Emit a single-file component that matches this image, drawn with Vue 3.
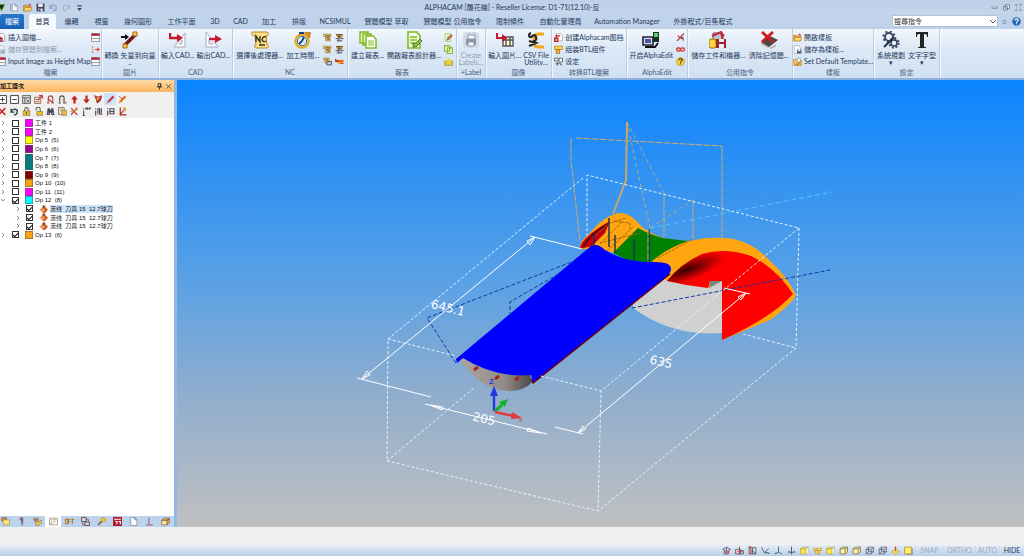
<script setup>
import { ref } from 'vue'

const tabs = [
  ['編輯', 31], ['視窗', 29], ['幾何圖形', 44], ['工作平面', 43], ['3D', 24], ['CAD', 27], ['加工', 30], ['排版', 30],
  ['NCSIMUL', 42], ['實體模型 萃取', 61], ['實體模型 公用指令', 71], ['限制條件', 44], ['自動化管理員', 57],
  ['Automation Manager', 76], ['外掛程式/巨集程式', 76]
]

const groups = [
  { label: '檔案', lists: [
    [{ i: 'insert', t: '插入圖檔...' }, { i: 'savebody', t: '儲存實體到檔案...', off: true }, { i: 'table', t: 'Input Image as Height Map' }],
    [{ i: 'table' }, { i: 'redarrow' }, { i: 'table' }]
  ] },
  { label: '圖片', big: [{ i: 'vector', t: '轉換 矢量到向量\n..' }] },
  { label: 'CAD', big: [{ i: 'cadin', t: '輸入CAD...' }, { i: 'cadout', t: '輸出CAD...' }] },
  { label: 'NC', big: [{ i: 'nc', t: '選擇後處理器...' }, { i: 'clock', t: '加工時間...' }], lists: [
    [{ i: 'ncs' }, { i: 'ncs' }, { i: 'nct' }], [{ i: 'ncl' }, { i: 'ncl' }, { i: 'ncr' }]
  ] },
  { label: '報表', big: [{ i: 'reports', t: '建立報表...' }, { i: 'design', t: '開啟報表設計器...' }], lists: [
    [{ i: 'gedit' }, { i: 'gcopy' }, { i: 'gstar' }]
  ] },
  { label: '+Label', big: [{ i: 'printer', t: 'Create\nLabels...', off: true }] },
  { label: '圖像', big: [{ i: 'imgin', t: '輸入圖片...' }, { i: 'csv', t: 'CSV File\nUtility...' }] },
  { label: '转换BTL檔案', lists: [
    [{ i: 'btl1', t: '创建Alphacam图档' }, { i: 'btl2', t: '组装BTL组件' }, { i: 'btl3', t: '设定' }]
  ] },
  { label: 'AlphaEdit', big: [{ i: 'aedit', t: '开启AlphaEdit' }], lists: [[{ i: 'slash' }, { i: 'redlink' }, { i: 'help2' }]] },
  { label: '公用指令', big: [{ i: 'savem', t: '儲存工件和機器...' }, { i: 'clearm', t: '清除記憶體...' }] },
  { label: '樣板', lists: [
    [{ i: 'open', t: '開啟樣板' }, { i: 'saveas', t: '儲存為樣板...' }, { i: 'settpl', t: 'Set Default Template...' }]
  ] },
  { label: '設定', big: [{ i: 'gears', t: '系統規劃\n▾' }, { i: 'bigt', t: '文字字型\n▾' }] }
]

const tools = [
  ['plusbox', 'minusbox', 'tgrid', 'tgridx', 'lockr', 'lockg', 'up', 'down', 'flag', 'pen', 'penx'],
  ['redx', 'undob', 'lock', 'unlock', 'binoc', 'pages', 'cross', 'ia', 'ib', 'ic', 'axis']
]

const rows = ref([
  { c: '#ff00ff', t: '工件 1' },
  { c: '#ff00ff', t: '工件 2' },
  { c: '#ffff00', t: 'Op 5  (5)' },
  { c: '#990099', t: 'Op 6  (6)' },
  { c: '#008080', t: 'Op 7  (7)' },
  { c: '#008080', t: 'Op 8  (8)' },
  { c: '#800000', t: 'Op 9  (9)' },
  { c: '#ffa010', t: 'Op 10  (10)' },
  { c: '#ff00ff', t: 'Op 11  (11)' },
  { c: '#00ffff', t: 'Op 12  (8)', on: true, open: true },
  { child: true, t: '流线  刀具 15  12.7球刀', on: true, sel: true },
  { child: true, t: '流线  刀具 15  12.7球刀', on: true },
  { child: true, t: '流线  刀具 15  12.7球刀', on: true },
  { c: '#ffa010', t: 'Op 13  (6)', on: true }
])

const panelTabs = ['ycube', 'drill', 'hand', 'list', 'text3', 'blocks', 'wand', 'redbox', 'page', 'perp', 'ybox']
const views = ['cr1', 'cr2', 'cr3', 'ax1', 'ax2', 'ax3', 'cy1', 'cy2', 'cy1', 'cy3', 'cy3', 'ck', 'ck', 'man', 'ysq']
const quick = ['logo', 'new', 'open', 'save', 'undo', 'redo', 'more']
const query = ref('')
</script>

<template>
  <div class="app">
    <svg class="defs" aria-hidden="true">
      <symbol id="logo" viewBox="0 0 16 16"><path d="M0 2h15L8 15z" fill="#6b0" /><path d="M3 3l5 10 5-10z" fill="#231" /></symbol>
      <symbol id="new" viewBox="0 0 16 16"><path d="M1 2v12M4 2v12h9V6L9 2zM9 2v4h4" fill="#fff" stroke="#68788e" /></symbol>
      <symbol id="open" viewBox="0 0 16 16"><path d="M1 14V4h5l2 2h6v8z" fill="#e8a33a" stroke="#a86a10" /><path d="M1 14l3-6h12l-3 6z" fill="#ffd96a" stroke="#b57a18" /><path d="M8 4l4-3 3 4z" fill="#d33" /></symbol>
      <symbol id="save" viewBox="0 0 16 16"><path d="M1 1h14v14H1z" fill="#445" /><path d="M4 1h8v6H4z" fill="#eef" /><path d="M4 10h8v5H4z" fill="#dde" /><path d="M5 11h3v4H5z" fill="#445" /></symbol>
      <symbol id="undo" viewBox="0 0 16 16"><path d="M2 3v6h6M2 8c4-7 12-4 11 1-.5 3-3 5-6 5" fill="none" stroke="#8b9db8" stroke-width="2" /></symbol>
      <symbol id="undob" viewBox="0 0 16 16"><path d="M2 3v6h6M2 8c4-7 12-4 11 1-.5 3-3 5-6 5" fill="none" stroke="#344" stroke-width="2.4" /></symbol>
      <symbol id="redo" viewBox="0 0 16 16"><path d="M13 3v6H8M13 8C10 1 2 3 2 9c0 3 2 5 6 5" fill="none" stroke="#a3b3ca" stroke-width="2" /></symbol>
      <symbol id="more" viewBox="0 0 16 16"><path d="M4 5h8" stroke="#345" stroke-width="2" /><path d="M4 9h8l-4 5z" fill="#345" /></symbol>
      <symbol id="insert" viewBox="0 0 16 16"><path d="M2 1h8l4 4v10H2z" fill="#fff" stroke="#667" /><path d="M1 9h8v5H1zM5 5v7m-3-3 3 3 3-3" fill="none" stroke="#b01030" stroke-width="2" /></symbol>
      <symbol id="savebody" viewBox="0 0 16 16"><path d="M3 1h7l3 4v10H3z" fill="#eef1f6" stroke="#9aa6b6" /><path d="M6 8h8v7H6z" fill="#a8b0bc" /></symbol>
      <symbol id="table" viewBox="0 0 16 16"><path d="M1 1h14v14H1z" fill="#fff" stroke="#555" /><path d="M1 1h14v4H1z" fill="#b41c30" /><path d="M1 10h14" stroke="#555" /></symbol>
      <symbol id="redarrow" viewBox="0 0 16 16"><path d="M3 2v12M1 3h4M1 13h4" stroke="#f08060" stroke-width="2" stroke-dasharray="3 1" /><path d="M7 7h4V4l5 4-5 4V9H7z" fill="#e04830" /></symbol>
      <symbol id="vector" viewBox="0 0 18 18"><path d="M0 5h4V3l4 3-4 3V7H0z" fill="#111" /><path d="M4 14 15 3" stroke="#701818" stroke-width="3.5" /><path d="M2 13h4v4H2zM12 1h4v4h-4z" fill="#ffd040" stroke="#a06010" /></symbol>
      <symbol id="cadin" viewBox="0 0 18 18"><path d="M16 2v14H5zM13 9v4h-3z" fill="#fbfcff" stroke="#aab" /><path d="M1 2v5h8" fill="none" stroke="#c31a30" stroke-width="2.4" /><path d="M8 3l6 4-6 4z" fill="#c31a30" /></symbol>
      <symbol id="cadout" viewBox="0 0 18 18"><path d="M2 1v15h12zM5 9v4h4z" fill="#fbfcff" stroke="#aab" /><path d="M5 8h8" stroke="#c31a30" stroke-width="2.2" /><path d="M11 4l7 4-7 4z" fill="#c31a30" /></symbol>
      <symbol id="nc" viewBox="0 0 18 18"><path d="M2 1h13c3 0 3 4 0 4l1 9c2 0 2 3 0 3H6c-3 0-3-3-1-3L4 5C0 5 0 1 2 1z" fill="#ffe18a" stroke="#b88420" /><path d="M5 11V5l4 6V5m6 1c-5-2-5 7 0 4M8 14h6" fill="none" stroke="#332" stroke-width="1.4" /></symbol>
      <symbol id="clock" viewBox="0 0 18 18"><path d="M10 1h7l-1 6-3 1z" fill="#c58a28" /><circle cx="8" cy="10" r="6.5" fill="#fff" stroke="#e3ac18" stroke-width="2.4" /><circle cx="8" cy="10" r="4.6" fill="#e0efff" stroke="#2b66b0" /><path d="M5 13l3-3 2-4M5 2h5" fill="none" stroke="#133c88" stroke-width="1.8" /></symbol>
      <symbol id="ncs" viewBox="0 0 16 16"><path d="M1 2h13v4h-2l1 8H5L4 6H1z" fill="#f6d26a" stroke="#8a6018" /><path d="M4 5h8M6 8h5M7 11h5" stroke="#432" stroke-width="1.5" /></symbol>
      <symbol id="nct" viewBox="0 0 16 16"><path d="M1 2h10v9H4z" fill="#efc250" stroke="#8a6018" /><path d="M7 8h8v6H7zM4 5h5" fill="#ccd" stroke="#444" stroke-width="1.5" /></symbol>
      <symbol id="ncl" viewBox="0 0 16 16"><path d="M2 2h12v5H2z" fill="#e6b33d" /><path d="M2 3h12M5 7h7M1 10h6M9 10h6M3 14h10M7 3v11" stroke="#333" stroke-width="1.5" /></symbol>
      <symbol id="ncr" viewBox="0 0 16 16"><path d="M4 5h11v7H4z" fill="#f3b43b" /><path d="M1 5l5 3H1zM6 7h9M9 11h6" fill="#c31" stroke="#c31" stroke-width="2" /></symbol>
      <symbol id="reports" viewBox="0 0 18 18"><path d="M1 1h8v11H1zM4 3h8v11H4z" fill="#eaf8d5" stroke="#80bb20" stroke-width="1.5" /><path d="M7 5h7l3 3v9H7z" fill="#fff" stroke="#80bb20" stroke-width="1.5" /><path d="M9 10h6m-6 2h6m-6 2h6" stroke="#80bb20" /></symbol>
      <symbol id="design" viewBox="0 0 18 18"><path d="M3 1h9l3 4v12H3z" fill="#f4fae9" stroke="#80bb20" stroke-width="1.6" /><path d="M5 6h7M5 9h7M5 12h4" stroke="#80bb20" stroke-width="1.4" /><path d="M8 12h3l4-4 2 2-6 6H8z" fill="#8bbd45" stroke="#567d22" /></symbol>
      <symbol id="gedit" viewBox="0 0 16 16"><path d="M2 1h10v14H2z" fill="#e5f5cb" stroke="#86b83c" /><path d="M5 13l2-5 6-5 2 2-6 6z" fill="#d5752a" stroke="#734" /></symbol>
      <symbol id="gcopy" viewBox="0 0 16 16"><path d="M1 1h9v10H1zM6 5h9v10H6z" fill="#eaf7cf" stroke="#86b83c" stroke-width="2" /></symbol>
      <symbol id="gstar" viewBox="0 0 16 16"><path d="M1 7h14v8H1z" fill="#d3c24b" stroke="#87902e" /><path d="M8 1l2 4 5 1-4 3 1 5-4-2-4 2 1-5-4-3 5-1z" fill="#f2d034" /></symbol>
      <symbol id="printer" viewBox="0 0 18 18"><rect x="1" y="1" width="16" height="16" rx="4" fill="#d3dae5" /><path d="M4 8h10v6H4z" fill="#8795aa" /><path d="M6 4h7v4H6zM6 11h6v4H6z" fill="#f6f8fc" stroke="#8795aa" /></symbol>
      <symbol id="imgin" viewBox="0 0 18 18"><path d="M7 6h10v9H7zM10 6v9M14 6v9M7 9h10" fill="#fff4da" stroke="#555" stroke-width="1.4" /><path d="M1 2v5h6" fill="none" stroke="#c31a30" stroke-width="2" /><path d="M6 3l5 4-5 4z" fill="#c31a30" /></symbol>
      <symbol id="csv" viewBox="0 0 18 18"><path d="M17 3H11C8 3 7 5 7 8v3c0 4 2 5 4 5h6" fill="none" stroke="#f6a81c" stroke-width="3" /><path d="M4 2C1 3 2 7 4 6s4-4 5 0-2 4-2 3M2 10l7 2-7 3" fill="none" stroke="#242424" stroke-width="2.2" /></symbol>
      <symbol id="btl1" viewBox="0 0 16 16"><path d="M4 1h8l3 3v10H6z" fill="#fff" stroke="#889" /><path d="M1 9h6v6H1zM4 3v5m0-3h7" fill="#e98" stroke="#b22" stroke-width="2" /></symbol>
      <symbol id="btl2" viewBox="0 0 16 16"><path d="M1 2h14v6H1z" fill="#ffd23a" stroke="#9b7610" /><path d="M4 8h6v7H4z" fill="#f8ae2d" stroke="#74510b" /></symbol>
      <symbol id="btl3" viewBox="0 0 16 16"><path d="M1 2h6v5H1zM9 2h6v7H9z" fill="#fff" stroke="#555" stroke-width="1.5" /><path d="M6 9v6M3 12h6M10 11l4 4" stroke="#5b6373" stroke-width="2" /></symbol>
      <symbol id="aedit" viewBox="0 0 18 18"><path d="M11 1h6v10h-6z" fill="#132" /><path d="M12 2h4v4h-4z" fill="#5c6" /><path d="M1 6h10v8H1z" fill="#d9dbe8" stroke="#223" stroke-width="1.6" /><path d="M3 8h6v4H3z" fill="#4a54a8" /><path d="M3 16h10l3-4" fill="none" stroke="#111" stroke-width="2" /></symbol>
      <symbol id="slash" viewBox="0 0 16 16"><path d="M14 1 2 14M3 5l9 6" stroke="#c43a3a" stroke-width="2.4" /><path d="M8 8h5v6" fill="none" stroke="#556" stroke-width="1.5" /></symbol>
      <symbol id="redlink" viewBox="0 0 16 16"><rect x="1" y="5" width="7" height="6" rx="3" fill="#dba" stroke="#b33" stroke-width="2" /><rect x="8" y="5" width="7" height="6" rx="3" fill="#fbb" stroke="#c33" stroke-width="2" /></symbol>
      <symbol id="help2" viewBox="0 0 16 16"><circle cx="8" cy="8" r="7" fill="#ffd73d" stroke="#a87916" /><path d="M5 6c1-4 7-3 6 0-1 2-3 2-3 4m0 1v2" fill="none" stroke="#4a3810" stroke-width="2" /></symbol>
      <symbol id="savem" viewBox="0 0 18 18"><path d="M4 2h7l3 3v5H4z" fill="#bac1cc" stroke="#666" /><path d="M3 5l9-4 3 4M12 1l2 9" fill="none" stroke="#c22640" stroke-width="2" /><rect x="0" y="8" width="7" height="9" rx="2" fill="#ffd23a" stroke="#9b7610" /><path d="M7 8h10v9H7z" fill="#9b2535" /><path d="M10 8h5v3h-5zM10 13h5v4h-5z" fill="#f1f1f1" /></symbol>
      <symbol id="clearm" viewBox="0 0 18 18"><path d="M1 11l9-6 8 4-9 7z" fill="#484848" /><path d="M2 12v2m2-1v2m2-1v2m2-1v2m3-1v2m2-3v2m2-3v2" stroke="#987" /><path d="M2 1l11 10M13 1 2 11" stroke="#d01e1e" stroke-width="2.8" /></symbol>
      <symbol id="saveas" viewBox="0 0 16 16"><path d="M2 1h8l3 4v10H2z" fill="#fff" stroke="#889" /><path d="M7 8h8v7H7z" fill="#526075" /><path d="M9 8h4v3H9z" fill="#fff" /></symbol>
      <symbol id="settpl" viewBox="0 0 16 16"><path d="M1 4h5l2 2h7v9H1z" fill="#f5c451" stroke="#af7e25" /><path d="M8 2h5v8H8z" fill="#fff" stroke="#889" /><path d="M5 12l3 2 5-6" fill="none" stroke="#d45e28" stroke-width="2" /></symbol>
      <symbol id="gears" viewBox="0 0 18 18"><circle cx="7" cy="6" r="4" fill="#eef1f8" stroke="#3d4964" stroke-width="2" /><circle cx="7" cy="6" r="5.6" fill="none" stroke="#3d4964" stroke-width="2" stroke-dasharray="2 2.4" /><circle cx="12" cy="12" r="3" fill="#eef1f8" stroke="#3d4964" stroke-width="1.6" /><circle cx="12" cy="12" r="4.6" fill="none" stroke="#3d4964" stroke-width="2" stroke-dasharray="2 1.6" /><path d="M2 16l9-9" stroke="#26314c" stroke-width="2" /></symbol>
      <symbol id="bigt" viewBox="0 0 18 18"><path d="M3 1h12v5h-1c0-3-1-3-3-3v11c0 2 0 2 2 2v1H5v-1c2 0 2 0 2-2V3C5 3 4 3 4 6H3z" fill="#252525" /></symbol>
      <symbol id="plusbox" viewBox="0 0 16 16"><path d="M1 1h14v14H1zM4 8h8M8 4v8" fill="#fff" stroke="#333" stroke-width="1.6" /></symbol>
      <symbol id="minusbox" viewBox="0 0 16 16"><path d="M1 1h14v14H1zM4 8h8" fill="#fff" stroke="#333" stroke-width="1.6" /></symbol>
      <symbol id="tgrid" viewBox="0 0 16 16"><path d="M1 1h14v14H1z" fill="#ddd" stroke="#555" stroke-width="1.5" /><path d="M1 5h14M5 5v10M8 8l5 5M13 8l-5 5" stroke="#555" stroke-width="1.5" /></symbol>
      <symbol id="tgridx" viewBox="0 0 16 16"><path d="M1 4h11v11H1zM3 8h7M3 12h7" fill="#ffe6ba" stroke="#866" stroke-width="1.5" /><path d="M7 9l8-8M9 1h6v5" fill="none" stroke="#c33" stroke-width="2" /></symbol>
      <symbol id="lockr" viewBox="0 0 16 16"><path d="M4 12V6c0-6 8-6 8 0v6M2 14h4m4 0h4" fill="none" stroke="#a44" stroke-width="2" /><path d="M5 8l7 6" stroke="#c22" stroke-width="2" /></symbol>
      <symbol id="lockg" viewBox="0 0 16 16"><path d="M3 12V6c0-6 8-6 8 0v6M1 14h4m4 0h6" fill="none" stroke="#555" stroke-width="2" /><path d="M8 6l6 5-5 1" fill="#b84" /></symbol>
      <symbol id="up" viewBox="0 0 16 16"><path d="M8 1l6 7h-4v7H6V8H2z" fill="#c51c1c" /></symbol>
      <symbol id="down" viewBox="0 0 16 16"><path d="M8 15l6-7h-4V1H6v7H2z" fill="#b52c1c" /></symbol>
      <symbol id="flag" viewBox="0 0 16 16"><path d="M2 2l5 2 6-2-2 8-5 3z" fill="#ec9a4a" stroke="#b33" stroke-width="2" /><path d="M5 14l8-10" stroke="#633" stroke-width="2" /></symbol>
      <symbol id="pen" viewBox="0 0 16 16"><path d="M1 15l2-5 9-9 3 3-9 9z" fill="#c84040" /><path d="M1 15l2-5 3 3z" fill="#99a" /></symbol>
      <symbol id="penx" viewBox="0 0 16 16"><path d="M1 15l2-5 9-9 3 3-9 9z" fill="#ee8a20" /><path d="M2 2l5 5M12 2 5 11" stroke="#c33" stroke-width="1.6" /></symbol>
      <symbol id="redx" viewBox="0 0 16 16"><path d="M1 2l12 12M13 2 1 14" stroke="#c22" stroke-width="2.6" /></symbol>
      <symbol id="lock" viewBox="0 0 16 16"><path d="M5 8V4c0-4 6-4 6 0v4" fill="none" stroke="#665" stroke-width="2" /><path d="M2 7h12v8H2z" fill="#eec321" stroke="#765" /><path d="M8 9v4" stroke="#543" stroke-width="2" /></symbol>
      <symbol id="unlock" viewBox="0 0 16 16"><path d="M4 6V3c0-4 7-4 7 1v5" fill="none" stroke="#665" stroke-width="2" /><path d="M5 8h10v7H5z" fill="#eec321" stroke="#765" /></symbol>
      <symbol id="binoc" viewBox="0 0 16 16"><path d="M3 2h4v3h2V2h4l2 12H9v-4H7v4H1z" fill="#444c5a" /><path d="M3 11h2m6 0h2" stroke="#dde" stroke-width="2" /></symbol>
      <symbol id="pages" viewBox="0 0 16 16"><path d="M1 1h10v12H1z" fill="#fff5d5" stroke="#765" stroke-width="1.5" /><path d="M3 4h6M3 7h5" stroke="#765" /><path d="M7 6h8v9H7z" fill="#f3b744" stroke="#765" /></symbol>
      <symbol id="cross" viewBox="0 0 16 16"><path d="M2 2l11 12M13 1 2 14" stroke="#a33" stroke-width="2" /><path d="M1 8h6M9 3l5 2" stroke="#ca3" stroke-width="2.5" /></symbol>
      <symbol id="ia" viewBox="0 0 16 16"><path d="M3 6v9M1 15h4M3 2v2M7 5V2h3v3m3 0V2h3" fill="none" stroke="#445" stroke-width="2" /></symbol>
      <symbol id="ib" viewBox="0 0 16 16"><path d="M3 6v9M3 2v2M7 12V3h3v9m3 0V2" fill="none" stroke="#445" stroke-width="2" /><path d="M8 13h7" stroke="#a55" stroke-width="2" /></symbol>
      <symbol id="ic" viewBox="0 0 16 16"><path d="M3 6v9M3 2v2M7 3h7v9H7zM7 8h7" fill="none" stroke="#445" stroke-width="2" /></symbol>
      <symbol id="axis" viewBox="0 0 16 16"><path d="M4 1v13h11M4 13l8-9" fill="none" stroke="#a22" stroke-width="2" /><path d="M8 2h5v5" fill="none" stroke="#da4" stroke-width="2.5" /></symbol>
      <symbol id="pin" viewBox="0 0 16 16"><path d="M5 1h6v8H5zM2 9h12M8 9v6M10 1v8" fill="none" stroke="#333" stroke-width="2" /></symbol>
      <symbol id="close" viewBox="0 0 16 16"><path d="M3 3l10 10M13 3 3 13" stroke="#444" stroke-width="2" /></symbol>
      <symbol id="tool" viewBox="0 0 16 16"><path d="M7 1h4l1 4 4 3-3 4-4 3-4-3-3-4 4-3z" fill="#c75a28" /><path d="M0 8l8-3 3 4-4 4z" fill="#ee9a52" /><path d="M8 1l-1 5" stroke="#643" stroke-width="2" /></symbol>
      <symbol id="ycube" viewBox="0 0 16 16"><path d="M1 1h9v6H1z" fill="#c68b43" stroke="#765" /><path d="M4 5h11v9H4z" fill="#ffe97a" stroke="#a88322" /></symbol>
      <symbol id="drill" viewBox="0 0 16 16"><path d="M5 1h6v4H5zM7 5h4v5H7zM8 10h2v5H8z" fill="#645c62" /><path d="M4 3h4M7 8h4" stroke="#c77" stroke-width="2" /></symbol>
      <symbol id="hand" viewBox="0 0 16 16"><path d="M1 1l4 9M5 1v8M9 1v8M1 5h8" stroke="#965c2a" stroke-width="1.5" /><path d="M5 8h6l4-3v6l-5 4H5z" fill="#eac049" stroke="#885" /></symbol>
      <symbol id="list" viewBox="0 0 16 16"><path d="M1 2h14v12H1z" fill="#fff" stroke="#666" /><path d="M3 5h3m2 0h5M3 9h3m2 0h3M3 12h3" stroke="#a77845" stroke-width="1.5" /></symbol>
      <symbol id="text3" viewBox="0 0 16 16"><path d="M1 4h4v8H1zM6 12V4h4m-4 4h3M11 4h5m-3 0v8" fill="none" stroke="#b07822" stroke-width="2" /></symbol>
      <symbol id="blocks" viewBox="0 0 16 16"><path d="M1 1h8v7H1zM7 9h8v6H7z" fill="#dde" stroke="#444" stroke-width="1.5" /><path d="M3 9v5h4M9 4h4v5" fill="none" stroke="#a44" stroke-width="1.5" /></symbol>
      <symbol id="wand" viewBox="0 0 16 16"><path d="M2 14l7-7" stroke="#876540" stroke-width="3" /><circle cx="11" cy="5" r="4" fill="#f1c52e" stroke="#a98221" /></symbol>
      <symbol id="redbox" viewBox="0 0 16 16"><path d="M0 0h16v16H0z" fill="#b11c2b" /><path d="M2 4h12M4 8h3v5m3-5h3v5" fill="none" stroke="#fff" stroke-width="2" /></symbol>
      <symbol id="page" viewBox="0 0 16 16"><path d="M3 1h7l4 4v10H3zM10 1v4h4" fill="#fff" stroke="#667" /></symbol>
      <symbol id="perp" viewBox="0 0 16 16"><path d="M7 1v13M2 14h12" stroke="#945" stroke-width="1.5" /></symbol>
      <symbol id="ybox" viewBox="0 0 16 16"><path d="M1 6h10v8H1z" fill="#ffe19b" stroke="#654" /><path d="M1 6l4-4h10l-4 4zM11 6l4-4v8l-4 4z" fill="#dda440" stroke="#654" /></symbol>
      <symbol id="cr1" viewBox="0 0 16 16"><path d="M1 6l7-4 7 4-3 1v7H4V7zM8 2v12M4 9h8" fill="none" stroke="#635a64" stroke-width="1.5" /><path d="M5 9h6v4H5z" fill="#c66" /></symbol>
      <symbol id="cr2" viewBox="0 0 16 16"><path d="M1 6h9v8H1zM10 8h5v6h-5M8 1v14" fill="none" stroke="#635a64" stroke-width="1.5" /><path d="M8 2v12M4 10h9" stroke="#c33" stroke-width="1.5" /></symbol>
      <symbol id="cr3" viewBox="0 0 16 16"><path d="M2 3h12v11H2zM2 3l12 11M8 3v11" fill="none" stroke="#555" stroke-width="1.5" /><path d="M1 2h5M5 7v7" stroke="#c33" stroke-width="2" /></symbol>
      <symbol id="ax1" viewBox="0 0 16 16"><path d="M1 2l5 10 8-8M6 12h8" fill="none" stroke="#465b74" stroke-width="1.6" /><path d="M10 11l5 3" stroke="#3a8c55" stroke-width="2" /></symbol>
      <symbol id="ax2" viewBox="0 0 16 16"><path d="M8 1v10L2 14M8 11l6 3" fill="none" stroke="#3a678a" stroke-width="1.6" /><path d="M1 13h4" stroke="#3a8c55" stroke-width="2" /></symbol>
      <symbol id="ax3" viewBox="0 0 16 16"><path d="M8 1v14M2 11h12M2 11l2-2M14 11l-2-2" fill="none" stroke="#435167" stroke-width="1.6" /></symbol>
      <symbol id="cy1" viewBox="0 0 16 16"><path d="M1 5l4-3h10v9l-4 3H1z" fill="#ffe74b" stroke="#a88e35" /><path d="M11 5v9M1 5h10l4-3" fill="none" stroke="#857844" /><path d="M11 5l4-3v9l-4 3z" fill="#e5ecf4" /></symbol>
      <symbol id="cy2" viewBox="0 0 16 16"><path d="M1 4h14v4H1zM4 8h8v6H4z" fill="#ffe34b" stroke="#a88330" /><path d="M8 4v10" stroke="#987" /></symbol>
      <symbol id="cy3" viewBox="0 0 16 16"><path d="M2 5l4-3h9v9l-4 3H2zM2 5h9v9M11 5l4-3" fill="#fff1a8" stroke="#81764b" stroke-width="1.5" /></symbol>
      <symbol id="ck" viewBox="0 0 16 16"><path d="M2 6l4-4h9v8l-4 4H2zM2 6h9v8M11 6l4-4M6 2v8h9M6 10l-4 4" fill="none" stroke="#555b6a" stroke-width="1.3" /></symbol>
      <symbol id="man" viewBox="0 0 16 16"><path d="M1 10l7-3 7 3-7 5z" fill="#ffdf55" stroke="#b59028" /><path d="M8 1v8M6 4h4" stroke="#c2502a" stroke-width="2" /></symbol>
      <symbol id="ysq" viewBox="0 0 16 16"><path d="M1 2h12v12H1z" fill="#ffef72" stroke="#b89228" stroke-width="1.5" /><path d="M15 4v11H4" fill="none" stroke="#998" stroke-width="1.5" /></symbol>
      <symbol id="min" viewBox="0 0 16 16"><path d="M2 7h12v3H2z" fill="#fff" stroke="#5d6c82" stroke-width="1.5" /></symbol>
      <symbol id="rest" viewBox="0 0 16 16"><path d="M5 2h10v8H5zM1 6h9v8H1z" fill="#eef4fb" stroke="#5d6c82" stroke-width="1.8" /></symbol>
      <symbol id="xwin" viewBox="0 0 16 16"><path d="M1 1h4l3 4 3-4h4l-5 7 5 7h-4l-3-4-3 4H1l5-7z" fill="#fff" stroke="#5d6c82" stroke-width="1.5" /></symbol>
      <symbol id="opt" viewBox="0 0 16 16"><path d="M3 9l5-5 5 5M4 12h8" fill="none" stroke="#6a7e9b" stroke-width="2" /></symbol>
      <symbol id="help" viewBox="0 0 16 16"><circle cx="8" cy="8" r="7.5" fill="#2369b6" /><path d="M5 6c1-4 7-3 6 0-1 2-3 2-3 4m0 1v2" fill="none" stroke="#fff" stroke-width="2" /></symbol>
    </svg>

    <header class="title">
      <nav class="quick">
        <button v-for="q in quick" :key="q" :aria-label="q"><svg class="ico s9"><use :href="'#' + q" /></svg></button>
      </nav>
      <h1>ALPHACAM [雕花機] - Reseller License: D1-71(12.10)-反</h1>
      <div class="wins">
        <button v-for="w in ['min', 'rest', 'xwin']" :key="w" :aria-label="w"><svg class="ico s7"><use :href="'#' + w" /></svg></button>
      </div>
    </header>

    <nav class="tabs">
      <button class="file">檔案</button>
      <button class="active">首頁</button>
      <button v-for="[t, w] in tabs" :key="t" :style="{ width: w + 'px' }">{{ t }}</button>
      <div class="search">
        <input v-model="query" placeholder="搜尋指令" aria-label="搜尋指令">
        <button aria-label="more commands"><svg viewBox="0 0 8 8"><path d="M1 3l3 3 3-3" fill="none" stroke="#555" /></svg></button>
      </div>
      <button aria-label="ribbon"><svg class="ico s7"><use href="#opt" /></svg></button>
      <button class="help" aria-label="help"><svg class="ico s9"><use href="#help" /></svg></button>
    </nav>

    <section class="ribbon">
      <div v-for="(g, n) in groups" :key="g.label" class="group" :class="'g' + n">
        <div class="body">
          <button v-for="b in g.big" :key="b.t" class="big" :class="{ off: b.off }">
            <svg class="ico s18"><use :href="'#' + b.i" /></svg><span>{{ b.t }}</span>
          </button>
          <div v-for="(l, k) in g.lists" :key="k" class="list">
            <button v-for="(b, j) in l" :key="j" :class="{ off: b.off }" :aria-label="b.t || b.i">
              <svg class="ico s9"><use :href="'#' + b.i" /></svg><span v-if="b.t">{{ b.t }}</span>
            </button>
          </div>
        </div>
        <div class="caption">{{ g.label }}</div>
      </div>
    </section>

    <main>
      <aside>
        <div class="phead">
          <h2>加工選次</h2>
          <button aria-label="pin"><svg class="ico s7"><use href="#pin" /></svg></button>
          <button aria-label="close"><svg class="ico s7"><use href="#close" /></svg></button>
        </div>
        <div class="tools">
          <div v-for="(r, n) in tools" :key="n">
            <button v-for="i in r" :key="i" :aria-label="i" :class="{ hot: i === 'pen' }"><svg class="ico s9"><use :href="'#' + i" /></svg></button>
          </div>
        </div>
        <div class="treebox">
          <ul class="tree">
            <li v-for="(r, n) in rows" :key="n" :class="{ child: r.child }">
              <svg class="exp" viewBox="0 0 6 6"><path :d="r.open ? 'M1 2l2 2 2-2' : 'M2 1l2 2-2 2'" fill="none" stroke="#888" /></svg>
              <input :id="'row' + n" v-model="r.on" type="checkbox">
              <svg v-if="r.child" class="ico s9 tool"><use href="#tool" /></svg>
              <i v-else class="swatch" :style="{ background: r.c }"></i>
              <label :for="'row' + n" :class="{ sel: r.sel }">{{ r.t }}</label>
            </li>
          </ul>
        </div>
        <div class="ptabs">
          <button v-for="p in panelTabs" :key="p" :aria-label="p" :class="{ cur: p === 'list' }"><svg class="ico s9"><use :href="'#' + p" /></svg></button>
        </div>
      </aside>

      <div class="view">
        <svg viewBox="177 80 847 447" preserveAspectRatio="xMidYMid meet">
          <defs>
            <radialGradient id="shade" gradientUnits="userSpaceOnUse" cx="0" cy="0" r="42" gradientTransform="translate(686 270) rotate(-20) scale(1 .28)">
              <stop offset="0" stop-color="#300" /><stop offset=".4" stop-color="#800" /><stop offset="1" stop-color="#f00" />
            </radialGradient>
            <linearGradient id="cap" x1="0" x2="1"><stop offset="0" stop-color="#aaa29c" /><stop offset=".6" stop-color="#948e8a" /><stop offset="1" stop-color="#4c4848" /></linearGradient>
          </defs>

          <path d="M633 302 668 274 708 284 723 281V333Q672 337 633 308z" fill="#d0d0d0" />
          <path d="M580 249Q579 242 588 235 606 213 622 213 632 214 642 227 662 242 690 241 706 237 722 238 748 238 768 259 788 277 796 295 793 303 770 320L722 340V281L708 288 667 281 650 263 600 249z" fill="#ffa50f" />
          <path d="M667 281Q680 264 702 254 725 247 751 256 776 268 793 294 770 319 722 340V281H710L708 288Q688 286 667 281z" fill="url(#shade)" />
          <path d="M710 281h12l-13 7z" fill="#7d8580" />
          <path d="M580 249Q580 238 610 221L605 233 592 246z" fill="#c5000e" />
          <path d="M584 246Q590 234 608 224" fill="none" stroke="#600" stroke-width="2" />
          <path d="M613 253 638 228Q651 235 663 238L688 241Q665 249 650 263L627 260z" fill="#008000" />
          <path d="M671 274 533 384 530 380 660 272z" fill="#64001c" />
          <path d="M461 357Q495 376 530 374L532 382Q525 391 508 391 482 390 461 362z" fill="url(#cap)" />
          <path d="M456 359 591 246Q598 243 605 250 626 263 655 262 672 262 671 270 670 275 660 281L533 382 531 375Q495 378 463 358L457 363z" fill="#0000ff" />
          <path d="M474 370l4-3M495 379l4-3M515 380l4-3" stroke="#a3281c" stroke-width="3" />
          <path d="M593 238 608 224 626 218M600 244 622 222M607 251 633 227M600 243 640 233M614 221 630 223 630 229M658 258 693 239" fill="none" stroke="#a66808" stroke-dasharray="3 1" />
          <path d="M609 218V247M615 235V253M594 233V246M634 239V261M649 229V263" fill="none" stroke="#142f60" stroke-width="1.4" />

          <g fill="none" stroke="#c8aa72" stroke-dasharray="7 1">
            <path d="M571 138V160L580 242M576 138 722 146M722 146V240M664 193V236M693 200V241" />
            <path d="M627 122 650 228M627 122 664 193M650 228 693 200" stroke-dasharray="4 3" stroke="#a9ad88" />
            <path d="M627 122 626 180 613 214" stroke-width="2" stroke-dasharray="none" stroke="#c7a668" />
            <path d="M648 229V262" />
          </g>
          <path d="M650 228 832 192" stroke="#50c8ff" stroke-dasharray="5 3" />
          <g fill="none" stroke="#1038a8" stroke-dasharray="4 2">
            <path d="M632 308 830 270" /><path d="M456 363 427 318 574 261M510 316V302L560 273" />
          </g>

          <g fill="none" stroke="#e4f4ff" stroke-dasharray="3 2">
            <path d="M583 178 388 339 387 461 598 511 601 391 799 228 587 175V237" />
            <path d="M799 228 796 348 598 511M743 334 796 348M388 339 456 356M541 376 601 391M387 461 475 387" />
          </g>
          <g fill="none" stroke="#fff">
            <path d="M362 379 535 237M530 236 582 249M357 378 431 397M425 404 547 434M578 433 746 293M555 427 583 434M724 288 750 294" />
            <path d="M362 379 370 375 367 371zM535 237 527 241 530 245zM430 405 443 407 442 410zM541 433 528 428 527 431zM578 433 586 429 583 426zM746 293 738 297 741 300z" />
          </g>
          <g class="dims">
            <text x="448" y="312" transform="rotate(14 448 308)">645.1</text>
            <text x="484" y="423" transform="rotate(13 484 419)">205</text>
            <text x="661" y="366" transform="rotate(13 661 362)">635</text>
          </g>
          <path d="M494 411V394" stroke="#2338e0" stroke-width="2.4" /><path d="M490 396l4-10 4 10z" fill="#2338e0" />
          <path d="M495 411 502 405" stroke="#12b32a" stroke-width="3" /><path d="M499 402l9-3-3 8z" fill="#12b32a" />
          <path d="M495 412 514 416" stroke="#e03a3a" stroke-width="2.4" /><path d="M512 412l10 6-11 1z" fill="#e03a3a" />
          <text class="z" x="489" y="384">Z</text><text class="x" x="519" y="422">x</text>
        </svg>
      </div>
    </main>

    <div class="prompt"></div>
    <footer>
      <button v-for="(v, n) in views" :key="n" :aria-label="v"><svg class="ico s9"><use :href="'#' + v" /></svg></button>
      <span class="st snap">SNAP</span><span class="st ortho">ORTHO</span><span class="st auto">AUTO</span><span class="st hide">HIDE</span>
    </footer>
  </div>
</template>

<style>
html, body, #app { height: 100%; margin: 0; }
body { overflow: hidden; }
</style>

<style scoped>
.app { display: flex; flex-direction: column; height: 100%; font: 7px/9px Lato, "Noto Sans CJK TC", sans-serif; color: #24395a; background: #bfd2ea; }
.defs { position: absolute; width: 0; height: 0; }
* { box-sizing: border-box; }
button { border: 0; padding: 0; margin: 0; background: none; font: inherit; color: inherit; display: flex; align-items: center; justify-content: center; white-space: nowrap; }
.ico { display: block; flex: none; }
.s7 { width: 7px; height: 7px; }
.s9 { width: 9px; height: 9px; }
.s18 { width: 18px; height: 18px; }

.title { display: grid; grid-template-columns: 1fr auto 1fr; align-items: center; height: 14px; background: linear-gradient(#bdd0e8, #c4d6ec); }
.quick { display: flex; gap: 4px; margin-left: -3px; }
h1 { margin: 0; font-size: 7px; line-height: 12px; font-weight: 400; }
.wins { display: flex; justify-content: flex-end; gap: 5px; padding-right: 2px; }

.tabs { display: flex; height: 15px; align-items: stretch; background: linear-gradient(#c1d4eb, #bdd1e9); }
.tabs > button { flex: none; }
.tabs .file { width: 24px; background: linear-gradient(#2a78cc, #1660b4); color: #fff; margin-right: 5px; border-radius: 2px 2px 0 0; }
.tabs .active { width: 27px; background: #f7fafe; border-radius: 2px 2px 0 0; }
.search { display: flex; width: 106px; height: 12px; margin: 1px 3px 0 auto; background: #fff; border: 1px solid #b4c2d4; }
.search input { flex: 1; min-width: 0; border: 0; padding: 0 1px; font: inherit; background: none; outline: 0; }
.search input::placeholder { color: #333; opacity: 1; }
.search svg { width: 8px; height: 8px; }
.tabs .help { margin: 0 3px 0 4px; }

.ribbon { display: grid; grid-template-columns: 102px 57px 74px 115px 109px 29px 66px 75px 61px 105px 81px 66px; height: 51px; background: linear-gradient(#f2f7fd, #dce8f6 40%, #d0e0f2); border-bottom: 2px solid #8fb2da; }
.group { display: flex; flex-direction: column; min-width: 0; border-right: 1px solid #bccde2; box-shadow: 1px 0 #f3f8fd; }
.body { display: flex; flex: 1; justify-content: space-evenly; padding-top: 2px; }
.caption { height: 10px; line-height: 8px; text-align: center; color: #4b6080; }
.big { flex-direction: column; justify-content: flex-start; }
.big span { white-space: pre; line-height: 7px; margin-top: 3px; }
.list { display: flex; flex-direction: column; }
.list button { height: 12px; gap: 2px; justify-content: flex-start; }
.off { color: #929dac; }
.g0 .body { justify-content: space-between; padding: 2px 4px 0 0; margin-left: -3px; }

main { display: flex; flex: 1; min-height: 0; }
aside { display: flex; flex-direction: column; width: 177px; flex: none; background: #fff; border-right: 3px solid #93b7e0; }
.phead { display: flex; height: 12px; gap: 2px; padding-right: 2px; align-items: center; background: linear-gradient(#ffdca6, #fdb55f); color: #222; }
h2 { margin: 0 auto 0 0; font-size: 6px; line-height: 10px; }
.tools { height: 26px; padding: 1px 0; background: #f0f0f0; }
.tools div { display: flex; margin-left: -4px; }
.tools button { width: 12px; height: 12px; }
.tools .hot { background: #cfe4f8; }
.treebox { flex: 1; min-height: 0; overflow: hidden; }
.tree { display: grid; grid-auto-rows: 1fr; height: 120px; margin: 1px 0 0; padding: 0; list-style: none; color: #111; font: 6px/8px "Liberation Sans", "Noto Sans CJK TC", "Noto Sans CJK SC", sans-serif; }
li { display: flex; align-items: center; min-height: 0; white-space: pre; }
li.child { padding-left: 15px; }
.exp { width: 6px; height: 6px; margin-right: 6px; }
.child .exp { margin-right: 5px; }
li input { appearance: none; flex: none; width: 7px; height: 7px; margin: 0 6px 0 0; border: 1px solid #333; background: #fff; display: grid; place-items: center; }
li input:checked::after { content: ""; width: 4px; height: 2px; border: solid #111; border-width: 0 0 1px 1px; transform: rotate(-45deg); }
.swatch { width: 8px; height: 8px; margin-right: 2px; border: 1px solid #5558; }
.tool { margin-right: 2px; }
.sel { background: #cbe4fb; }
.ptabs { display: flex; height: 11px; background: #bdd2ec; margin-left: -3px; }
.ptabs button { width: 16px; }
.ptabs .cur { background: #fff; }

.view { flex: 1; min-width: 0; background: linear-gradient(#0a84ff, #5ea2e4 47%, #8fadcd 70%, #c0c0c2); }
.view svg { display: block; width: 100%; height: 100%; }
.dims text { fill: #fff; font: 12px "DejaVu Sans", sans-serif; text-anchor: middle; }
.z { fill: #2338e0; font: bold 8px "Liberation Sans", sans-serif; }
.x { fill: #e03a3a; font: 7px "Liberation Sans", sans-serif; }

.prompt { height: 18px; background: #f0f0f0; }
footer { display: flex; justify-content: flex-end; align-items: center; height: 11px; background: linear-gradient(#e6eef8, #b9cde6); }
footer button { width: 13px; }
.st { text-align: center; color: #9dadc5; border-left: 1px solid #ccd9ea; line-height: 9px; }
.snap { width: 28px; }
.ortho { width: 32px; }
.auto { width: 24px; }
.hide { width: 25px; color: #24395a; }
</style>
